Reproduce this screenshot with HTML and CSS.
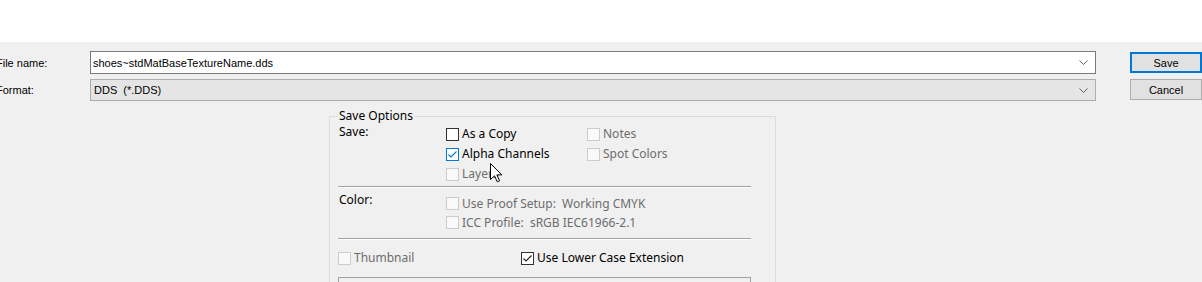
FILE: index.html
```html
<!DOCTYPE html>
<html>
<head>
<meta charset="utf-8">
<link rel="stylesheet" href="styles.css">
</head>
<body>
<div class="page">
  <div class="top"></div>
  <div class="dialog">
    <div class="fields">
      <div class="lbl">File name:</div>
      <div class="combo combo-edit"><span class="val">shoes~stdMatBaseTextureName.dds</span><svg class="chev" width="9" height="5" viewBox="0 0 9 5"><path d="M0.5 0.5 L4.5 4.5 L8.5 0.5" fill="none" stroke="#606060" stroke-width="1"/></svg></div>
      <div class="btn btn-default">Save</div>
      <div class="lbl">Format:</div>
      <div class="combo combo-list"><span class="val">DDS&nbsp; (*.DDS)</span><svg class="chev" width="9" height="5" viewBox="0 0 9 5"><path d="M0.5 0.5 L4.5 4.5 L8.5 0.5" fill="none" stroke="#606060" stroke-width="1"/></svg></div>
      <div class="btn">Cancel</div>
    </div>

    <div class="group">
      <div class="gtitle">Save Options</div>
      <div class="sec-save">
        <div class="slabel">Save:</div>
        <label class="cb"><span class="box"></span>As a Copy</label>
        <label class="cb dis"><span class="box"></span>Notes</label>
        <div></div>
        <label class="cb"><span class="box checked focus"><svg width="11" height="11" viewBox="0 0 11 11"><path d="M1.5 5.5 L4 8 L9.5 2.5" fill="none" stroke="#0078d7" stroke-width="1.1"/></svg></span>Alpha Channels</label>
        <label class="cb dis"><span class="box"></span>Spot Colors</label>
        <div></div>
        <label class="cb dis"><span class="box"></span>Layers</label>
        <div></div>
      </div>
      <div class="sep"></div>
      <div class="sec-color">
        <div class="slabel">Color:</div>
        <div class="crows">
          <label class="cb dis"><span class="box"></span>Use Proof Setup:&nbsp; Working CMYK</label>
          <label class="cb dis"><span class="box"></span>ICC Profile:&nbsp; sRGB IEC61966-2.1</label>
        </div>
      </div>
      <div class="sep sep2"></div>
      <div class="sec-opts">
        <label class="cb dis"><span class="box"></span>Thumbnail</label>
        <label class="cb"><span class="box checked"><svg width="11" height="11" viewBox="0 0 11 11"><path d="M1.5 5.5 L4 8 L9.5 2.5" fill="none" stroke="#222" stroke-width="1.1"/></svg></span>Use Lower Case Extension</label>
      </div>
      <div class="subbox"></div>
    </div>
  </div>
  <svg class="cursor" width="13" height="20" viewBox="0 0 13 20"><path d="M0.5 0.5 L0.5 16.5 L4.5 12.8 L7.3 18.8 L9.6 17.8 L6.9 11.9 L11.8 11.9 Z" fill="#fff" stroke="#000" stroke-width="1" stroke-linejoin="miter"/></svg>
</div>
</body>
</html>
```
FILE: styles.css
```css
* { box-sizing: border-box; }
html, body { margin: 0; padding: 0; }
body {
  width: 1202px;
  height: 282px;
  overflow: hidden;
  background: #f0f0f0;
}
.page { position: relative; width: 1202px; height: 282px; overflow: hidden; }
.top { height: 42px; background: #ffffff; }
.dialog {
  background: #f0f0f0;
  height: 240px;
  padding-top: 9px;
  font-family: "Liberation Sans", Arial, sans-serif;
  font-size: 11px;
  color: #000;
}
.fields {
  display: grid;
  grid-template-columns: 90px 1006px 106px;
  column-gap: 0;
  row-gap: 5px;
  grid-template-rows: 23px 22px;
}
.lbl {
  display: flex;
  align-items: center;
  margin-left: -4px;
}
.combo {
  display: flex;
  align-items: center;
  justify-content: space-between;
  padding: 0 7px 0 2px;
}
.combo-edit { background: #fff; border: 1px solid #7a7a7a; }
.combo-list { background: #e5e5e5; border: 1px solid #adadad; padding-left: 3px; }
.chev { display: block; }
.btn {
  justify-self: end;
  width: 72px;
  height: 21px;
  background: #e1e1e1;
  border: 1px solid #adadad;
  display: flex;
  align-items: center;
  justify-content: center;
}
.btn-default { border: 2px solid #0078d7; margin-top: 1px; }

.group {
  margin-top: 15px;
  margin-left: 329px;
  width: 447px;
  height: 200px;
  border: 1px solid #dcdcdc;
  padding: 0 24px 0 8px;
  font-family: "Noto Sans", "Open Sans", sans-serif;
  font-size: 12px;
  color: #000;
}
.gtitle {
  margin-top: -9px;
  margin-left: 0;
  width: fit-content;
  padding: 0 1px;
  line-height: 16px;
  background: #f0f0f0;
}
.sec-save {
  display: grid;
  grid-template-columns: 108px 141px 1fr;
  grid-template-rows: 20px 20px 20px;
}
.slabel { line-height: 16px; align-self: start; padding-left: 1px; }
.cb {
  display: flex;
  align-items: center;
  gap: 3px;
  white-space: nowrap;
  line-height: 16px;
}
.cb.dis { color: #6d6d6d; }
.box {
  width: 13px;
  height: 13px;
  border: 1px solid #333;
  background: #fff;
  flex: none;
  display: flex;
  align-items: center;
  justify-content: center;
}
.cb.dis .box { border-color: #cccccc; background: #f9f9f9; }
.box.focus { border-color: #0078d7; }
.box svg { display: block; }
.sep {
  margin-top: 2px;
  height: 2px;
  border-top: 1px solid #a0a0a0;
  border-bottom: 1px solid #ffffff;
}
.sec-color {
  display: grid;
  grid-template-columns: 108px 1fr;
  padding-top: 4px;
}
.crows {
  display: grid;
  grid-template-rows: 19px 19px;
  margin-top: 2px;
}
.sep2 { margin-top: 6px; }
.sec-opts {
  margin-top: 8px;
  height: 20px;
  display: grid;
  grid-template-columns: 183px 1fr;
}
.subbox {
  margin-top: 9px;
  height: 30px;
  border: 1px solid #a0a0a0;
  border-bottom: none;
}
.cursor {
  position: absolute;
  left: 490px;
  top: 163px;
}
```
